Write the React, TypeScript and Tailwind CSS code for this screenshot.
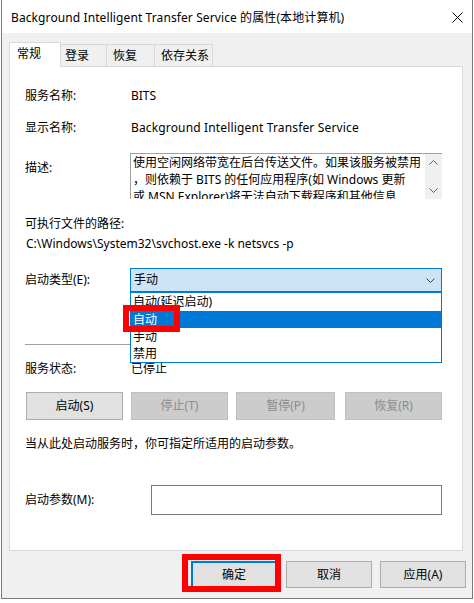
import React from "react";

function Chevron({ up = false, className = "" }: { up?: boolean; className?: string }) {
  return (
    <svg width="9" height="5" viewBox="0 0 9 5" className={className}>
      <path
        d={up ? "M0.5 4.5 L4.5 0.5 L8.5 4.5" : "M0.5 0.5 L4.5 4.5 L8.5 0.5"}
        fill="none"
        stroke="currentColor"
        strokeWidth="1"
      />
    </svg>
  );
}

function Row({ label, children }: { label: string; children?: React.ReactNode }) {
  return (
    <div className="flex h-[20px] items-center leading-[20px]">
      <div className="w-[105px] shrink-0">{label}</div>
      <div className="pl-[1px]">{children}</div>
    </div>
  );
}

export default function App() {
  return (
    <div className="relative h-[603px] w-[474px] overflow-hidden bg-white font-['Noto_Sans','Noto_Sans_CJK_SC',sans-serif] text-[12px] text-black">
      <div className="ml-[1px] flex h-[599px] w-[472px] flex-col border border-t-0 border-[#7a7a7a] bg-[#f0f0f0]">
        {/* title bar */}
        <div className="flex h-[33px] shrink-0 items-center justify-between bg-white pl-[9px] pr-[9px] pt-[2px]">
          <span className="whitespace-nowrap leading-[20px] tracking-[0.1px]">
            Background Intelligent Transfer Service 的属性(本地计算机)
          </span>
          <svg width="11" height="11" viewBox="0 0 11 11">
            <path d="M0.5 0.5 L10.5 10.5 M10.5 0.5 L0.5 10.5" stroke="#000" strokeWidth="1" />
          </svg>
        </div>

        {/* body */}
        <div className="flex flex-1 flex-col pt-[9px]">
          <div className="pl-[7px] pr-[9px]">
            {/* tabs */}
            <div className="flex h-[24px] items-start">
              <div className="relative z-10 -mb-[1px] flex h-[25px] w-[52px] items-center border-x border-t border-[#d9d9d9] bg-white pb-[2px] pl-[7px]">
                常规
              </div>
              <div className="mt-[2px] flex h-[22px] w-[46px] items-center border-r border-t border-[#d9d9d9] pl-[4px] pt-[1px]">
                登录
              </div>
              <div className="mt-[2px] flex h-[22px] w-[48px] items-center border-r border-t border-[#d9d9d9] pl-[6px] pt-[1px]">
                恢复
              </div>
              <div className="mt-[2px] flex h-[22px] w-[58px] items-center border-r border-t border-[#d9d9d9] pl-[6px] pt-[1px]">
                依存关系
              </div>
            </div>

            {/* panel */}
            <div className="relative flex h-[485px] flex-col border border-[#d9d9d9] bg-white pl-[15px] pr-[20px]">
              <div className="mt-[19px]">
                <Row label="服务名称:">BITS</Row>
              </div>
              <div className="mt-[12px]">
                <Row label="显示名称:">
                  <span className="tracking-[0.15px]">Background Intelligent Transfer Service</span>
                </Row>
              </div>

              {/* description */}
              <div className="mt-[15px] flex">
                <div className="mt-[5px] h-[20px] w-[105px] shrink-0 leading-[20px]">描述:</div>
                <div className="flex h-[46px] w-[312px] overflow-hidden border-l border-t border-[#a0a0a0]">
                  <div className="flex-1 overflow-hidden whitespace-nowrap pl-[2px] leading-[17px]">
                    <div>使用空闲网络带宽在后台传送文件。如果该服务被禁用</div>
                    <div>，则依赖于 BITS 的任何应用程序(如 Windows 更新</div>
                    <div>或 MSN Explorer)将无法自动下载程序和其他信息</div>
                  </div>
                  <div className="flex w-[17px] shrink-0 flex-col items-center justify-between bg-[#f0f0f0] pb-[6px] pt-[6px] text-[#606060]">
                    <Chevron up />
                    <Chevron />
                  </div>
                </div>
              </div>

              <div className="mt-[15px] h-[20px] leading-[20px]">可执行文件的路径:</div>
              <div className="h-[20px] pl-[1px] leading-[20px]">
                C:\Windows\System32\svchost.exe -k netsvcs -p
              </div>

              {/* startup type */}
              <div className="mt-[14px] flex items-center">
                <div className="w-[105px] shrink-0">启动类型(E):</div>
                <div className="relative z-20 w-[312px]">
                  <div className="flex h-[24px] items-center justify-between border border-[#0078d7] bg-[#cce4f7] pl-[3px] pr-[6px]">
                    <span>手动</span>
                    <Chevron className="text-[#404040]" />
                  </div>
                  <div className="absolute left-0 top-full w-full border border-[#0078d7] bg-white">
                    <div className="flex h-[18px] items-center pl-[2px]">自动(延迟启动)</div>
                    <div className="flex h-[17px] items-center bg-[#0078d7] pl-[2px] text-white">自动</div>
                    <div className="flex h-[17px] items-center pl-[2px]">手动</div>
                    <div className="flex h-[17px] items-center pl-[2px]">禁用</div>
                  </div>
                </div>
              </div>

              <div className="mt-[52px] h-[1px] bg-[#a0a0a0]" />

              <div className="mt-[14px]">
                <Row label="服务状态:">已停止</Row>
              </div>

              {/* service buttons */}
              <div className="ml-[1px] mt-[13px] flex h-[28px]">
                <div className="flex w-[97px] items-center justify-center border border-[#adadad] bg-[#e1e1e1]">
                  启动(S)
                </div>
                <div className="ml-[8px] flex w-[97px] items-center justify-center border border-[#bfbfbf] bg-[#cccccc] text-[#8c8c8c]">
                  停止(T)
                </div>
                <div className="ml-[8px] flex w-[99px] items-center justify-center border border-[#bfbfbf] bg-[#cccccc] text-[#8c8c8c]">
                  暂停(P)
                </div>
                <div className="ml-[10px] flex w-[97px] items-center justify-center border border-[#bfbfbf] bg-[#cccccc] text-[#8c8c8c]">
                  恢复(R)
                </div>
              </div>

              <div className="mt-[14px] h-[20px] leading-[20px]">
                当从此处启动服务时，你可指定所适用的启动参数。
              </div>

              <div className="mt-[31px] flex items-center">
                <div className="w-[126px] shrink-0">启动参数(M):</div>
                <div className="h-[30px] w-[291px] border border-[#7a7a7a] bg-white" />
              </div>
            </div>
          </div>

          {/* dialog buttons */}
          <div className="mt-[10px] flex h-[27px] justify-end pr-[6px]">
            <div className="flex w-[86px] items-center justify-center border-2 border-[#0078d7] bg-[#e1e1e1]">
              确定
            </div>
            <div className="ml-[9px] flex w-[86px] items-center justify-center border border-[#adadad] bg-[#e1e1e1]">
              取消
            </div>
            <div className="ml-[8px] flex w-[86px] items-center justify-center border border-[#adadad] bg-[#e1e1e1]">
              应用(A)
            </div>
          </div>
        </div>
      </div>

      {/* red annotation boxes */}
      <div className="absolute left-[123px] top-[305px] z-30 h-[27px] w-[57px] border-[6px] border-[#ff0000]" />
      <div className="absolute left-[182px] top-[554px] z-30 h-[38px] w-[99px] border-[6px] border-[#ff0000]" />
    </div>
  );
}
